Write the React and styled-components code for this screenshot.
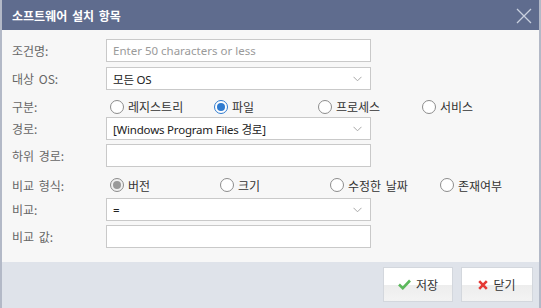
import React from "react";
import styled, { createGlobalStyle } from "styled-components";

const GlobalStyle = createGlobalStyle`
  html, body {
    margin: 0;
    padding: 0;
    background: #ffffff;
  }
  body {
    font-family: "Noto Sans", "Noto Sans CJK KR", sans-serif;
    font-size: 12px;
  }
`;

const Dialog = styled.div`
  width: 541px;
  height: 308px;
  box-sizing: border-box;
  border-left: 2px solid #b3b9c7;
  border-right: 2px solid #b3b9c7;
  display: flex;
  flex-direction: column;
  background: #f7f7f7;
`;

const TitleBar = styled.div`
  height: 30px;
  flex: none;
  background: #5f6c8e;
  display: flex;
  align-items: center;
  justify-content: space-between;
  padding: 0 7px 0 10px;
  box-sizing: border-box;
`;

const Title = styled.span`
  color: #ffffff;
  font-family: "Noto Sans CJK KR", sans-serif;
  font-weight: bold;
  font-size: 12px;
  word-spacing: 2px;
`;

const CloseButton = styled.button`
  width: 17px;
  height: 17px;
  padding: 0;
  margin-top: 2px;
  border: none;
  background: transparent;
  display: flex;
  align-items: center;
  justify-content: center;
`;

const Body = styled.div`
  flex: 1;
  padding: 9px 0 14px 10px;
  display: flex;
  flex-direction: column;
`;

const Row = styled.div`
  height: ${(p) => p.h}px;
  display: grid;
  grid-template-columns: 94px 265px;
  align-items: ${(p) => (p.radio ? "center" : "start")};
`;

const Label = styled.span`
  color: #666666;
  font-family: "Noto Sans CJK KR", sans-serif;
  font-size: 12px;
  line-height: 23px;
  word-spacing: 2px;
`;

const TextBox = styled.div`
  height: 23px;
  box-sizing: border-box;
  border: 1px solid #c9c9c9;
  background: #ffffff;
  display: flex;
  align-items: center;
  padding: 0 8px 0 6px;
  color: ${(p) => (p.placeholder ? "#9a9a9a" : "#222222")};
  font-size: 11.5px;
  white-space: nowrap;
`;

const SelectText = styled.span`
  flex: 1;
  letter-spacing: -0.2px;
`;

const RadioGroup = styled.div`
  display: grid;
  grid-template-columns: repeat(4, ${(p) => p.col}px);
  width: 440px;
  padding-left: 4px;
`;

const RadioItem = styled.label`
  display: flex;
  align-items: center;
  gap: 4px;
  color: #333333;
  font-family: "Noto Sans CJK KR", sans-serif;
  font-size: 12px;
  white-space: nowrap;
  word-spacing: 2px;
`;

const RadioCircle = styled.span`
  width: 14px;
  height: 14px;
  box-sizing: border-box;
  border-radius: 50%;
  border: 1px solid ${(p) => (p.tone === "blue" ? "#2f7bd0" : "#8c8c8c")};
  background: ${(p) => (p.tone === "gray" ? "#f0f0f0" : "#ffffff")};
  display: flex;
  align-items: center;
  justify-content: center;
  &::after {
    content: "";
    display: ${(p) => (p.tone ? "block" : "none")};
    width: 8px;
    height: 8px;
    border-radius: 50%;
    background: ${(p) => (p.tone === "blue" ? "#2f7bd0" : "#9a9a9a")};
  }
`;

const Footer = styled.div`
  height: 46px;
  flex: none;
  background: #dfe3ea;
  display: flex;
  justify-content: flex-end;
  align-items: flex-start;
  gap: 8px;
  padding: 5px 6px 0 0;
  box-sizing: border-box;
`;

const Button = styled.button`
  width: ${(p) => p.w}px;
  height: 35px;
  box-sizing: border-box;
  border: 1px solid #d3d7dd;
  background: linear-gradient(#ffffff 0%, #ffffff 50%, #ededed 52%, #f3f3f3 100%);
  display: flex;
  align-items: center;
  justify-content: center;
  gap: 5px;
  padding: 0;
  color: #333333;
  font-family: "Noto Sans CJK KR", sans-serif;
  font-size: 12px;
`;

const Chevron = () => (
  <svg width="9" height="6" viewBox="0 0 9 6">
    <path d="M0.5 0.8 L4.5 4.8 L8.5 0.8" fill="none" stroke="#a8a8a8" strokeWidth="1" />
  </svg>
);

const Radio = ({ tone, children }) => (
  <RadioItem>
    <RadioCircle tone={tone} />
    {children}
  </RadioItem>
);

export default function App() {
  return (
    <>
      <GlobalStyle />
      <Dialog>
        <TitleBar>
          <Title>소프트웨어 설치 항목</Title>
          <CloseButton aria-label="close">
            <svg width="16" height="16" viewBox="0 0 16 16">
              <path d="M1 1 L15 15 M15 1 L1 15" stroke="#c9d0de" strokeWidth="1.3" />
            </svg>
          </CloseButton>
        </TitleBar>
        <Body>
          <Row h={28}>
            <Label>조건명:</Label>
            <TextBox placeholder="1">Enter 50 characters or less</TextBox>
          </Row>
          <Row h={28}>
            <Label>대상 OS:</Label>
            <TextBox>
              <SelectText>모든 OS</SelectText>
              <Chevron />
            </TextBox>
          </Row>
          <Row h={22} radio>
            <Label>구분:</Label>
            <RadioGroup col={104}>
              <Radio>레지스트리</Radio>
              <Radio tone="blue">파일</Radio>
              <Radio>프로세스</Radio>
              <Radio>서비스</Radio>
            </RadioGroup>
          </Row>
          <Row h={27}>
            <Label>경로:</Label>
            <TextBox>
              <SelectText>[Windows Program Files 경로]</SelectText>
              <Chevron />
            </TextBox>
          </Row>
          <Row h={28}>
            <Label>하위 경로:</Label>
            <TextBox />
          </Row>
          <Row h={26} radio>
            <Label>비교 형식:</Label>
            <RadioGroup col={110}>
              <Radio tone="gray">버전</Radio>
              <Radio>크기</Radio>
              <Radio>수정한 날짜</Radio>
              <Radio>존재여부</Radio>
            </RadioGroup>
          </Row>
          <Row h={27}>
            <Label>비교:</Label>
            <TextBox>
              <SelectText>=</SelectText>
              <Chevron />
            </TextBox>
          </Row>
          <Row h={23}>
            <Label>비교 값:</Label>
            <TextBox />
          </Row>
        </Body>
        <Footer>
          <Button w={70}>
            <svg width="13" height="11" viewBox="0 0 13 11">
              <path d="M1 5.5 L4.8 9.2 L12 1.5" fill="none" stroke="#5cb85c" strokeWidth="2.6" />
            </svg>
            저장
          </Button>
          <Button w={72}>
            <svg width="10" height="10" viewBox="0 0 10 10">
              <path d="M1.2 1.2 L8.8 8.8 M8.8 1.2 L1.2 8.8" stroke="#e53935" strokeWidth="2.6" />
            </svg>
            닫기
          </Button>
        </Footer>
      </Dialog>
    </>
  );
}
